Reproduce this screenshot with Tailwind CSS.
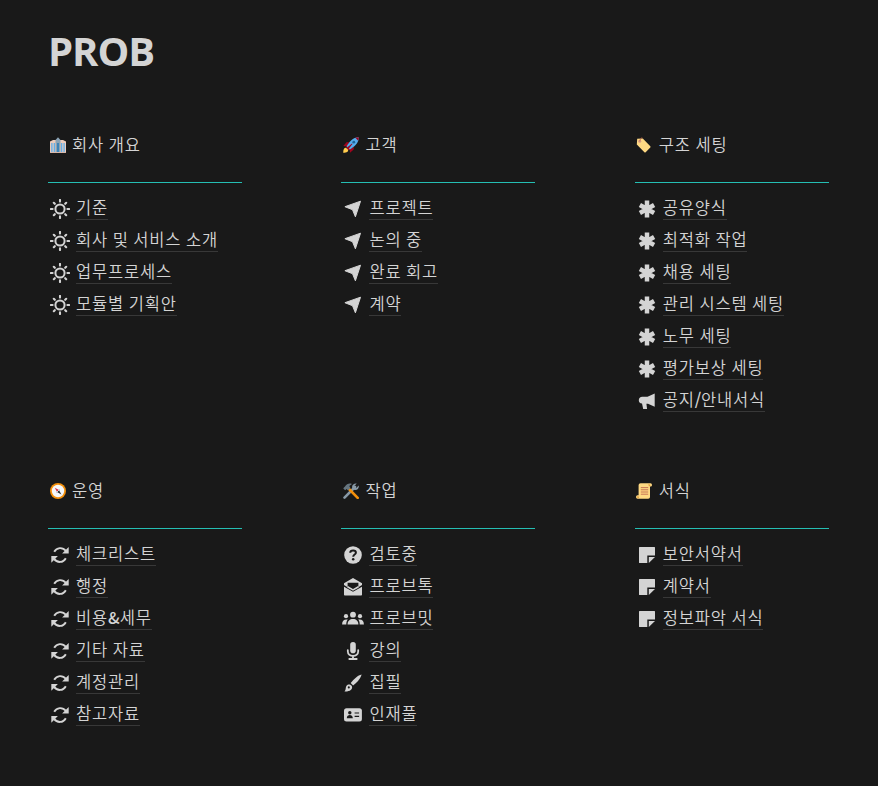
<!DOCTYPE html>
<html lang="ko">
<head>
<meta charset="utf-8">
<title>PROB</title>
<script src="https://cdn.jsdelivr.net/npm/@tailwindcss/browser@4"></script>
</head>
<body class="bg-[#191919] text-[#d4d4d4] min-h-screen px-12 pt-6 font-['Noto_Sans_CJK_KR',sans-serif]">
<svg class="hidden">
  <symbol id="sun" viewBox="0 0 20 20"><circle cx="10" cy="10" r="4.6" fill="none" stroke="currentColor" stroke-width="2"/><path d="M10 .9v1.7M10 17.4v1.7M.9 10h1.7M17.4 10h1.7M3.8 3.8l1 1M15.200 15.200l1 1M3.800 16.200l1-1M15.200 4.800l1-1" stroke="currentColor" stroke-width="2.100" stroke-linecap="round"/></symbol>
  <symbol id="plane" viewBox="0 0 20 20"><path d="M17.500 2.200 1.900 7.700 9.500 10.700 12.400 17.800Z" fill="currentColor" stroke="currentColor" stroke-width="1" stroke-linejoin="round"/></symbol>
  <symbol id="star" viewBox="0 0 20 20"><path d="M10 1.500v17M2.900 6l14.200 8M2.900 14l14.200-8" stroke="currentColor" stroke-width="4.500"/></symbol>
  <symbol id="horn" viewBox="0 0 20 20"><path d="M17.700 2.500v13.200L11 12.700H9.400l.7 5.300H6.200L5 12.600C2.800 12.200 1.800 11 1.800 9.200c0-2.100 1.400-3.400 3.500-3.400H10.500Z" fill="currentColor"/></symbol>
  <symbol id="sync" viewBox="0 0 20 20"><path d="M4.200 6.800C6.700 2.300 12.500 1.800 16 6M3.900 13.600C7.200 18.200 13.200 18 15.800 13.200" fill="none" stroke="currentColor" stroke-width="1.900"/><path d="M18.700 2v6.500h-6.600ZM1.300 11h6.600l-6.600 6.800Z" fill="currentColor"/></symbol>
  <symbol id="help" viewBox="0 0 20 20"><circle cx="10" cy="10" r="8.800" fill="currentColor"/><path d="M7.200 7.700C7.400 4.600 12.900 4.600 12.900 7.700 12.900 9.600 10.200 9.500 10.200 11.700" fill="none" stroke="#191919" stroke-width="2"/><circle cx="10.200" cy="14.300" r="1.250" fill="#191919"/></symbol>
  <symbol id="mail" viewBox="0 0 20 20"><path d="M1 6.200 10 1l9 5.200v1.800l-3.600 2.300V5.800H4.600v4.500L1 8ZM1 9.700l9 5 9-5v8.100q0 .8-.8.800H1.800q-.8 0-.8-.8Z" fill="currentColor"/><path d="M4.500 9.800 10 12.900 15.500 9.800" fill="none" stroke="currentColor" stroke-width="1.600"/></symbol>
  <symbol id="people" viewBox="0 0 22 20"><g fill="currentColor"><circle cx="11" cy="5.700" r="2.900"/><circle cx="4" cy="7.200" r="2.100"/><circle cx="18" cy="7.200" r="2.100"/><path d="M5.600 15.400C5.600 11.800 7.800 9.900 11 9.900s5.400 1.900 5.400 5.500ZM.1 15.400c0-3.700 2-5.500 5.700-4.900C4.600 11.800 4.300 13.400 4.300 15.400ZM21.900 15.400c0-3.700-2-5.500-5.700-4.900 1.200 1.300 1.500 2.900 1.500 4.900Z"/></g></symbol>
  <symbol id="mic" viewBox="0 0 20 20"><rect x="7.200" y="1" width="5.600" height="11.200" rx="2.800" fill="currentColor"/><path d="M4.800 9.200v1c0 6.300 10.400 6.300 10.400 0v-1M10 15v3.200M6.300 18h7.400" fill="none" stroke="currentColor" stroke-width="1.800" stroke-linecap="round"/></symbol>
  <symbol id="brush" viewBox="0 0 20 20"><path d="M18.600 1.400C15 2.100 10.400 6.200 7.700 10l2.400 2.400C14 9.500 17.900 4.900 18.600 1.400Z" fill="currentColor"/><path d="M1.500 18.500C3.400 16.500 2.200 14.800 3.500 12.800 5 10.700 8 11.300 8.900 13.300 10.200 16.600 6.200 18.900 1.500 18.500Z" fill="currentColor"/><circle cx="5.800" cy="14.400" r="1.050" fill="#191919"/></symbol>
  <symbol id="card" viewBox="0 0 20 20"><rect x="1" y="3.300" width="17.900" height="13.200" rx="2.500" fill="currentColor"/><circle cx="6.800" cy="7.800" r="1.700" fill="#191919"/><path d="M3.800 13.200c0-4.200 6-4.200 6 0ZM11.600 7.400h4.500v1.200h-4.500ZM11.600 10.700h4.500v1.200h-4.500Z" fill="#191919"/></symbol>
  <symbol id="note" viewBox="0 0 20 20"><path d="M2.600 2h14.800q.6 0 .6.600v7.900h-7.700V18H2.600q-.6 0-.6-.6V2.600q0-.6.600-.6ZM11.800 12H18l-6.200 6Z" fill="currentColor"/></symbol>
</svg>

<h1 class="h-14 text-[40px] leading-[53px] font-bold tracking-[-1px] font-['Open_Sans',sans-serif]">PROB</h1>

<main class="mt-[49px] grid grid-cols-[194px_194px_194px] gap-x-[99.4px] text-[16.5px] font-[350] tracking-[0.82px] [word-spacing:-0.8px]">
  <section class="h-[346px]">
    <h2 class="flex h-8 items-center gap-[6px] pl-[2px]">
      <svg class="size-4" viewBox="0 0 16 16"><path fill="#ebccbd" d="M0 4.500 3 3h10l3 1.500V16H0Z"/><path fill="#8ba3b5" d="M5.500 3 8 .3 10.500 3v13h-5Z"/><path fill="#55acee" d="M1.300 6h1.200v9H1.300ZM3.700 6h1.200v9H3.700ZM11.100 6h1.200v9h-1.200ZM13.500 6h1.200v9h-1.200Z"/><path fill="#3b83b8" d="M7 6h2v9H7Z"/><path fill="#d8b6a9" d="M0 15h16v1H0Z"/></svg>
      <span class="-mt-px">회사 개요</span></h2>
    <hr class="mt-[21px] mb-[9px] border-0 h-px bg-[#25beb3]">
    <ul class="leading-[23px]">
      <li class="flex h-8 items-center gap-[6px] pl-[2px]"><svg class="size-5 mt-[2px]"><use href="#sun"/></svg><a class="h-6 border-b border-[#383838]">기준</a></li>
      <li class="flex h-8 items-center gap-[6px] pl-[2px]"><svg class="size-5 mt-[2px]"><use href="#sun"/></svg><a class="h-6 border-b border-[#383838]">회사 및 서비스 소개</a></li>
      <li class="flex h-8 items-center gap-[6px] pl-[2px]"><svg class="size-5 mt-[2px]"><use href="#sun"/></svg><a class="h-6 border-b border-[#383838]">업무프로세스</a></li>
      <li class="flex h-8 items-center gap-[6px] pl-[2px]"><svg class="size-5 mt-[2px]"><use href="#sun"/></svg><a class="h-6 border-b border-[#383838]">모듈별 기획안</a></li>
    </ul>
  </section>

  <section class="h-[346px]">
    <h2 class="flex h-8 items-center gap-[6px] pl-[2px]">
      <svg class="size-4" viewBox="0 0 16 16"><path fill="#a0041e" d="M6 5 3.500 5.300.3 9l4 .2ZM11 10l-.3 2.500L7 15.700l-.2-4ZM3 9h4v4H4Z"/><path fill="#55acee" d="M15.800.2C11.500.2 7.500 2.500 3.600 9.200L6.800 12.400C13.500 8.500 15.800 4.500 15.800.2Z"/><path fill="#a0041e" d="M15.800.2c-1.300 0-2.400.2-3.500.6l2.900 2.900c.4-1.100.6-2.200.6-3.500ZM4 10.500l5-4 .5.500-4 5Z"/><path fill="#ffcc4d" d="M.2 15.800C.2 12 1.400 10.600 3.200 10.900L5.100 12.800C5.400 14.600 4 15.800.2 15.800Z"/><circle cx="10.800" cy="5.200" r="1.400" fill="#226699"/></svg>
      <span class="-mt-px">고객</span></h2>
    <hr class="mt-[21px] mb-[9px] border-0 h-px bg-[#25beb3]">
    <ul class="leading-[23px]">
      <li class="flex h-8 items-center gap-[6px] pl-[2px]"><svg class="size-5 mt-[2px]"><use href="#plane"/></svg><a class="h-6 border-b border-[#383838]">프로젝트</a></li>
      <li class="flex h-8 items-center gap-[6px] pl-[2px]"><svg class="size-5 mt-[2px]"><use href="#plane"/></svg><a class="h-6 border-b border-[#383838]">논의 중</a></li>
      <li class="flex h-8 items-center gap-[6px] pl-[2px]"><svg class="size-5 mt-[2px]"><use href="#plane"/></svg><a class="h-6 border-b border-[#383838]">완료 회고</a></li>
      <li class="flex h-8 items-center gap-[6px] pl-[2px]"><svg class="size-5 mt-[2px]"><use href="#plane"/></svg><a class="h-6 border-b border-[#383838]">계약</a></li>
    </ul>
  </section>

  <section class="h-[346px]">
    <h2 class="flex h-8 items-center gap-[7px] pl-px">
      <svg class="size-4" viewBox="0 0 16 16"><path fill="#ffd983" d="M1.200 1.800 6.800 1.500 14.300 9.300q.6.700 0 1.300l-4.600 4.700q-.7.600-1.300 0L.8 7.500Z"/><circle cx="3.700" cy="4.300" r="1.500" fill="#d99e82"/><path d="M3.700 4.300C4 2 5.500.6 6.300 1" fill="none" stroke="#c1694f" stroke-width=".9"/></svg>
      <span class="-mt-px">구조 세팅</span></h2>
    <hr class="mt-[21px] mb-[9px] border-0 h-px bg-[#25beb3]">
    <ul class="leading-[23px]">
      <li class="flex h-8 items-center gap-[6px] pl-[2px]"><svg class="size-5 mt-[2px]"><use href="#star"/></svg><a class="h-6 border-b border-[#383838]">공유양식</a></li>
      <li class="flex h-8 items-center gap-[6px] pl-[2px]"><svg class="size-5 mt-[2px]"><use href="#star"/></svg><a class="h-6 border-b border-[#383838]">최적화 작업</a></li>
      <li class="flex h-8 items-center gap-[6px] pl-[2px]"><svg class="size-5 mt-[2px]"><use href="#star"/></svg><a class="h-6 border-b border-[#383838]">채용 세팅</a></li>
      <li class="flex h-8 items-center gap-[6px] pl-[2px]"><svg class="size-5 mt-[2px]"><use href="#star"/></svg><a class="h-6 border-b border-[#383838]">관리 시스템 세팅</a></li>
      <li class="flex h-8 items-center gap-[6px] pl-[2px]"><svg class="size-5 mt-[2px]"><use href="#star"/></svg><a class="h-6 border-b border-[#383838]">노무 세팅</a></li>
      <li class="flex h-8 items-center gap-[6px] pl-[2px]"><svg class="size-5 mt-[2px]"><use href="#star"/></svg><a class="h-6 border-b border-[#383838]">평가보상 세팅</a></li>
      <li class="flex h-8 items-center gap-[6px] pl-[2px]"><svg class="size-5 mt-[2px]"><use href="#horn"/></svg><a class="h-6 border-b border-[#383838]">공지<b class="font-medium tracking-[-0.2px]">/</b>안내서식</a></li>
    </ul>
  </section>

  <section>
    <h2 class="flex h-8 items-center gap-[6px] pl-[2px]">
      <svg class="size-4" viewBox="0 0 16 16"><circle cx="8" cy="8" r="8" fill="#f4900c"/><circle cx="8" cy="8" r="6.200" fill="#f5f8fa"/><path d="M4.800 4.800 9 7 7 9Z" fill="#dd2e44"/><path d="M11.400 11.400 7 9l2-2Z" fill="#292f33"/><path d="M10 6 6 10" stroke="#ccd6dd" stroke-width="1"/></svg>
      <span class="-mt-px">운영</span></h2>
    <hr class="mt-[21px] mb-[9px] border-0 h-px bg-[#25beb3]">
    <ul class="leading-[23px]">
      <li class="flex h-8 items-center gap-[6px] pl-[2px]"><svg class="size-5 mt-[2px]"><use href="#sync"/></svg><a class="h-6 border-b border-[#383838]">체크리스트</a></li>
      <li class="flex h-8 items-center gap-[6px] pl-[2px]"><svg class="size-5 mt-[2px]"><use href="#sync"/></svg><a class="h-6 border-b border-[#383838]">행정</a></li>
      <li class="flex h-8 items-center gap-[6px] pl-[2px]"><svg class="size-5 mt-[2px]"><use href="#sync"/></svg><a class="h-6 border-b border-[#383838]">비용<b class="font-medium tracking-[0px]">&amp;</b>세무</a></li>
      <li class="flex h-8 items-center gap-[6px] pl-[2px]"><svg class="size-5 mt-[2px]"><use href="#sync"/></svg><a class="h-6 border-b border-[#383838]">기타 자료</a></li>
      <li class="flex h-8 items-center gap-[6px] pl-[2px]"><svg class="size-5 mt-[2px]"><use href="#sync"/></svg><a class="h-6 border-b border-[#383838]">계정관리</a></li>
      <li class="flex h-8 items-center gap-[6px] pl-[2px]"><svg class="size-5 mt-[2px]"><use href="#sync"/></svg><a class="h-6 border-b border-[#383838]">참고자료</a></li>
    </ul>
  </section>

  <section>
    <h2 class="flex h-8 items-center gap-[6px] pl-[2px]">
      <svg class="size-4" viewBox="0 0 16 16"><path d="M1.500 14.600 12 4" stroke="#8899a6" stroke-width="2.600" stroke-linecap="round"/><path d="M13.700.5 11.300 3l.3 1.600 1.600.3 2.500-2.400C16.500 5.500 14 8 11 6.800L9.300 5C8.300 2.100 11 0 13.700.5Z" fill="#8899a6"/><path d="m6 6 8.700 8.800" stroke="#f4900c" stroke-width="2.600" stroke-linecap="round"/><path d="M.2 5.200 2 3.500C3.500.8 6.500-.1 9 1L6.300 3.100l1.100 2-2.300 2.300-1.500-1.300-1.500 1.100Z" fill="#66757f"/></svg>
      <span class="-mt-px">작업</span></h2>
    <hr class="mt-[21px] mb-[9px] border-0 h-px bg-[#25beb3]">
    <ul class="leading-[23px]">
      <li class="flex h-8 items-center gap-[6px] pl-[2px]"><svg class="size-5 mt-[2px]"><use href="#help"/></svg><a class="h-6 border-b border-[#383838]">검토중</a></li>
      <li class="flex h-8 items-center gap-[6px] pl-[2px]"><svg class="size-5 mt-[2px]"><use href="#mail"/></svg><a class="h-6 border-b border-[#383838]">프로브톡</a></li>
      <li class="flex h-8 items-center gap-[5px] pl-px"><svg class="w-[22px] h-5 mt-[2px]"><use href="#people"/></svg><a class="h-6 border-b border-[#383838]">프로브밋</a></li>
      <li class="flex h-8 items-center gap-[6px] pl-[2px]"><svg class="size-5 mt-[2px]"><use href="#mic"/></svg><a class="h-6 border-b border-[#383838]">강의</a></li>
      <li class="flex h-8 items-center gap-[6px] pl-[2px]"><svg class="size-5 mt-[2px]"><use href="#brush"/></svg><a class="h-6 border-b border-[#383838]">집필</a></li>
      <li class="flex h-8 items-center gap-[6px] pl-[2px]"><svg class="size-5 mt-[2px]"><use href="#card"/></svg><a class="h-6 border-b border-[#383838]">인재풀</a></li>
    </ul>
  </section>

  <section>
    <h2 class="flex h-8 items-center gap-[7px] pl-px">
      <svg class="size-4" viewBox="0 0 16 16"><path fill="#ffd983" d="M4.500.2H14.500q1.500.2 1.500 1.800T14.600 3.600H14V14q0 1.800-1.800 1.800H1.600Q0 15.600 0 14t1.600-1.700H2.600V2Q2.700.3 4.500.2Z"/><path d="M4.800 4.600h7.400M4.800 6.800h7.400M4.800 9h7.400M4.800 11.200h7.400" stroke="#c1694f" stroke-width=".9"/><path d="M1.500 12.800q1.600.2 1.500 2.200H1.300ZM13 .8q-1.300 1 0 2.400h1.800Z" fill="#e39f3d"/></svg>
      <span class="-mt-px">서식</span></h2>
    <hr class="mt-[21px] mb-[9px] border-0 h-px bg-[#25beb3]">
    <ul class="leading-[23px]">
      <li class="flex h-8 items-center gap-[6px] pl-[2px]"><svg class="size-5 mt-[2px]"><use href="#note"/></svg><a class="h-6 border-b border-[#383838]">보안서약서</a></li>
      <li class="flex h-8 items-center gap-[6px] pl-[2px]"><svg class="size-5 mt-[2px]"><use href="#note"/></svg><a class="h-6 border-b border-[#383838]">계약서</a></li>
      <li class="flex h-8 items-center gap-[6px] pl-[2px]"><svg class="size-5 mt-[2px]"><use href="#note"/></svg><a class="h-6 border-b border-[#383838]">정보파악 서식</a></li>
    </ul>
  </section>
</main>
</body>
</html>
